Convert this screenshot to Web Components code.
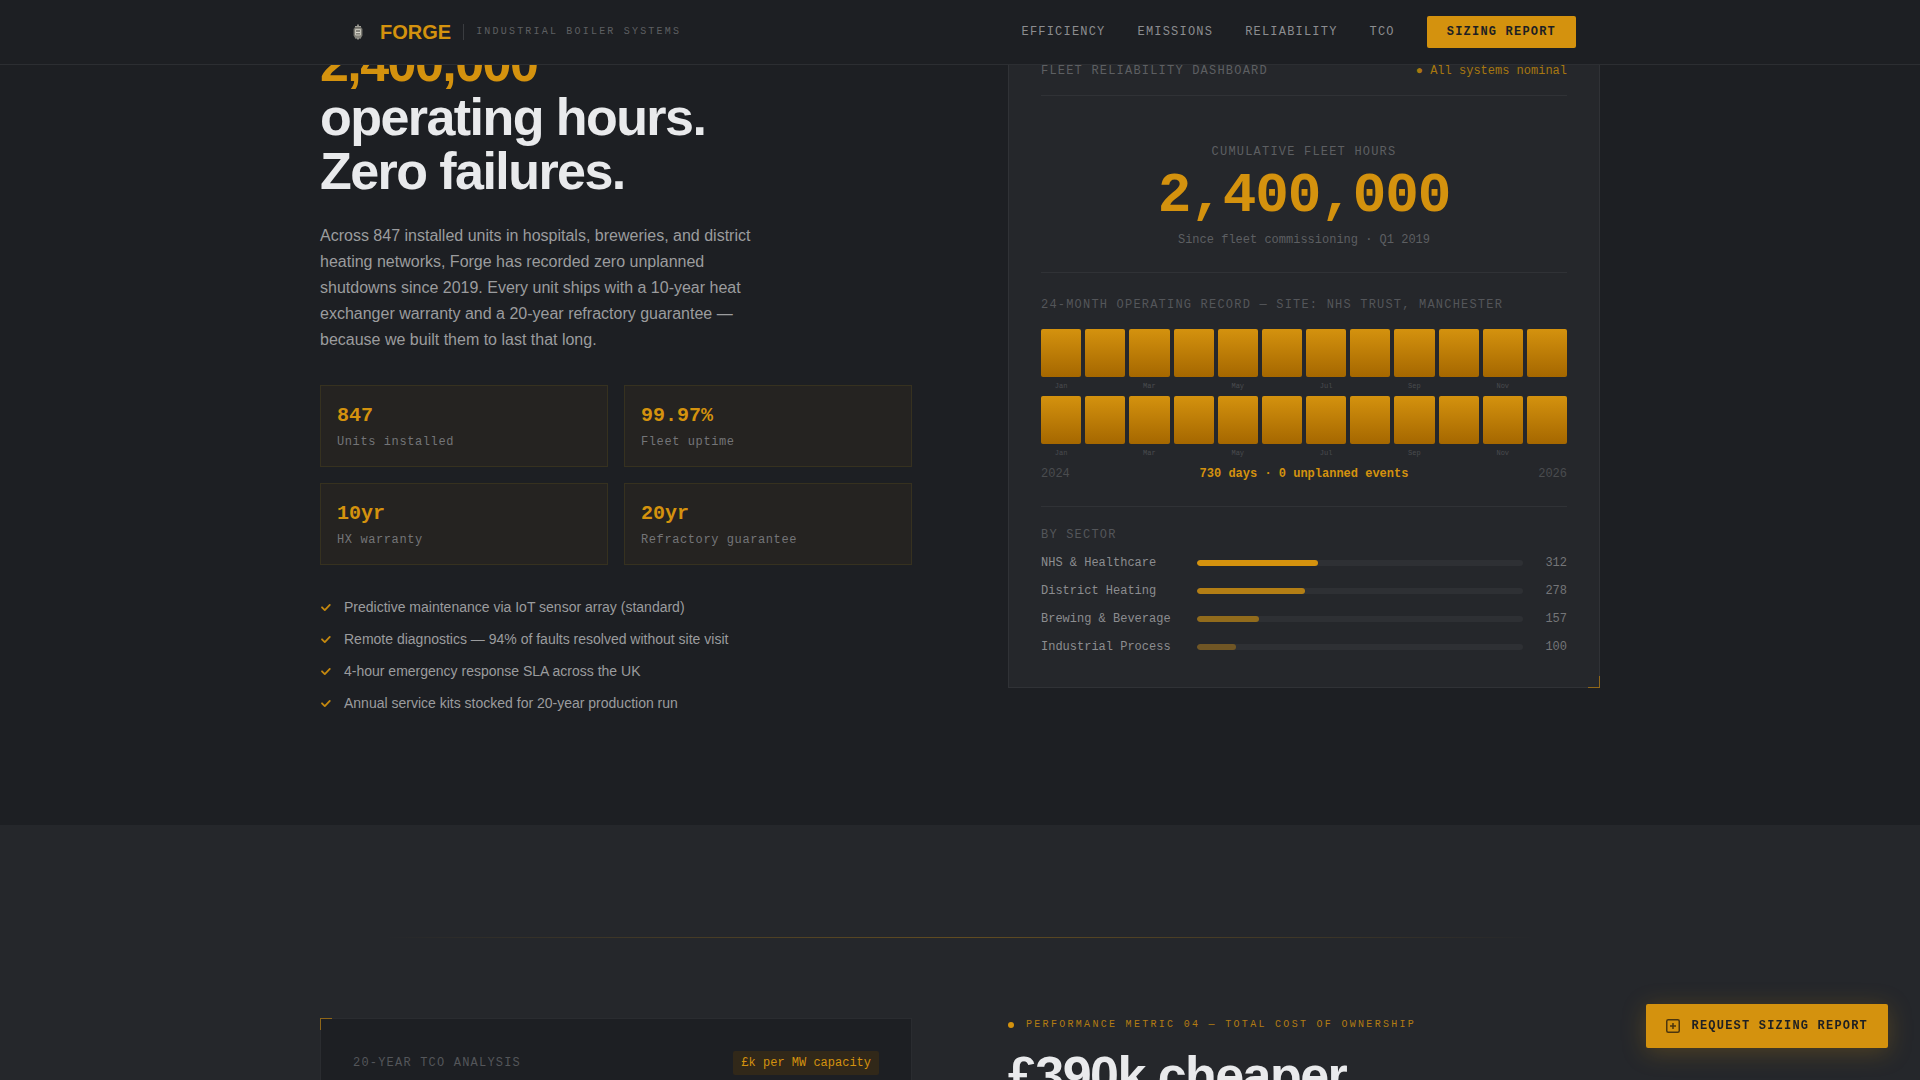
<!DOCTYPE html>
<html lang="en">
<head>
<meta charset="utf-8">
<title>Forge — Industrial Boiler Systems</title>
<style>
  :root {
    --ink: #1d1f23;
    --panel: #25272b;
    --line: #303236;
    --amber: #d4920e;
    --white: #e9eaec;
    --soft: #9b9c9e;
    --muted: #8c8d90;
    --mid: #747578;
    --dim: #5d5f62;
    --faint: #4a4c4f;
    --sans: "Liberation Sans", Arial, sans-serif;
    --mono: "Liberation Mono", "Courier New", monospace;
  }
  html, body { height: 100%; }
  body { margin: 0; background: var(--ink); color: var(--white); font-family: var(--sans); overflow: hidden; }
</style>
</head>
<body>
<forge-header></forge-header>
<main>
  <metric-section tone="ink">
    <reliability-story slot="left"></reliability-story>
    <fleet-dashboard slot="right"></fleet-dashboard>
  </metric-section>
  <metric-section tone="panel" divided>
    <tco-card slot="left"></tco-card>
    <tco-story slot="right"></tco-story>
  </metric-section>
</main>
<floating-cta>Request Sizing Report</floating-cta>

<script>
const define = (name, html, setup) => {
  const template = document.createElement('template');
  template.innerHTML = '<style>*,:host::after{box-sizing:border-box}h2,p{margin:0;padding:0}</style>' + html;
  customElements.define(name, class extends HTMLElement {
    constructor() {
      super();
      this.attachShadow({ mode: 'open' }).append(template.content.cloneNode(true));
    }
    connectedCallback() { if (setup) setup(this, this.shadowRoot); }
  });
};

define('forge-header', `
  <style>
    :host { display: block; position: fixed; inset: 0 0 auto; z-index: 10; background: #1d1f23; border-bottom: 1px solid #2c2e32; }
    .bar { max-width: 1280px; height: 64px; margin: 0 auto; padding: 0 24px; box-sizing: border-box; display: flex; align-items: center; justify-content: space-between; }
    .brand { display: flex; align-items: center; text-decoration: none; gap: 12px; }
    .mark { display: flex; align-items: center; gap: 8px; color: var(--amber); font: bold 20px/24px var(--sans); }
    .tag { border-left: 1px solid #3a3c40; padding-left: 12px; font: 10px/16px var(--mono); letter-spacing: 0.22em; color: var(--dim); text-transform: uppercase; }
    nav { display: flex; align-items: center; gap: 32px; font: 12px/16px var(--mono); letter-spacing: 0.1em; text-transform: uppercase; }
    nav a { color: var(--muted); text-decoration: none; }
    button { font: bold 12px/16px var(--mono); letter-spacing: 0.1em; text-transform: uppercase; color: #1d1f23; background: var(--amber); border: 0; border-radius: 2px; padding: 8px 20px; }
  </style>
  <div class="bar">
    <a class="brand" href="#top">
      <span class="mark">
        <svg width="28" height="28" viewBox="0 0 28 28" fill="none" aria-hidden="true">
          <path d="M14 6.500v2M14 19.500v2" stroke="#8b8a84" stroke-width="2"/>
          <path d="M11 9.500h6l1 1.500v6.500l-1 2h-6l-1-2v-6.500z" fill="#85847c" stroke="#6d6c66" stroke-width="1"/>
          <path d="M11 8.500h6M11 20h6" stroke="#a09f97" stroke-width="1"/>
          <path d="M11.500 11.500h5v5.500h-5z" stroke="#c4c2b8" stroke-width="1"/>
          <path d="M12 14.500h4" stroke="#dad8ce" stroke-width="1"/>
        </svg>FORGE</span>
      <span class="tag">Industrial Boiler Systems</span>
    </a>
    <nav>
      <a href="#efficiency">Efficiency</a><a href="#emissions">Emissions</a><a href="#reliability">Reliability</a><a href="#tco">TCO</a>
      <button type="button">Sizing Report</button>
    </nav>
  </div>`);

define('metric-section', `
  <style>
    :host { display: block; background: var(--ink); padding: 5px 32px 112px; }
    :host([tone="panel"]) { background: var(--panel); padding-top: 112px; }
    hr { display: none; }
    :host([divided]) hr { display: block; max-width: 1152px; height: 1px; margin: 0 auto 80px; border: 0; background: linear-gradient(90deg, transparent, var(--amber), transparent); opacity: 0.35; }
    .grid { max-width: 1280px; margin: 0 auto; display: grid; grid-template-columns: 1fr 1fr; gap: 96px; align-items: center; }
    :host([divided]) .grid { align-items: start; }
  </style>
  <hr>
  <div class="grid"><slot name="left"></slot><slot name="right"></slot></div>`);

define('stat-tile', `
  <style>
    :host { display: block; border: 1px solid #36311f; background: #252321; padding: 16px; font-family: var(--mono); }
    .value { font-size: 20px; line-height: 28px; font-weight: bold; color: var(--amber); }
    .label { margin-top: 4px; font-size: 12px; line-height: 16px; letter-spacing: 0.05em; color: var(--mid); }
  </style>
  <div class="value"><slot name="value"></slot></div>
  <div class="label"><slot></slot></div>`);

define('check-item', `
  <style>
    :host { display: flex; align-items: center; gap: 12px; font: 14px/20px var(--sans); color: var(--soft); }
  </style>
  <svg width="12" height="12" viewBox="0 0 12 12" fill="none" stroke="#c4880f" stroke-width="1.800" stroke-linecap="round" stroke-linejoin="round" aria-hidden="true"><path d="M2 6.300l2.800 2.800 5-5.200"/></svg>
  <span><slot></slot></span>`);

define('reliability-story', `
  <style>
    :host { display: block; padding-top: 31px; }
    h2 { font-size: 52px; line-height: 54px; letter-spacing: -0.03em; font-weight: bold; }
    h2 span { display: block; }
    .hot { color: var(--amber); }
    p { margin: 25px 0 32px; max-width: 448px; font-size: 16px; line-height: 26px; color: var(--soft); }
    .tiles { display: grid; grid-template-columns: 1fr 1fr; gap: 16px; margin-bottom: 32px; }
    .list { display: grid; gap: 12px; }
  </style>
  <h2><span class="hot">2,400,000</span><span>operating hours.</span><span>Zero failures.</span></h2>
  <p>Across 847 installed units in hospitals, breweries, and district heating networks, Forge has recorded zero unplanned shutdowns since 2019. Every unit ships with a 10-year heat exchanger warranty and a 20-year refractory guarantee — because we built them to last that long.</p>
  <div class="tiles">
    <stat-tile><span slot="value">847</span>Units installed</stat-tile>
    <stat-tile><span slot="value">99.97%</span>Fleet uptime</stat-tile>
    <stat-tile><span slot="value">10yr</span>HX warranty</stat-tile>
    <stat-tile><span slot="value">20yr</span>Refractory guarantee</stat-tile>
  </div>
  <div class="list" role="list">
    <check-item role="listitem">Predictive maintenance via IoT sensor array (standard)</check-item>
    <check-item role="listitem">Remote diagnostics — 94% of faults resolved without site visit</check-item>
    <check-item role="listitem">4-hour emergency response SLA across the UK</check-item>
    <check-item role="listitem">Annual service kits stocked for 20-year production run</check-item>
  </div>`);

define('corner-card', `
  <style>
    :host { display: block; position: relative; background: var(--panel); border: 1px solid var(--line); padding: 32px; font: 12px/16px var(--mono); }
    :host([tone="ink"]) { background: var(--ink); border-color: #2a2c30; }
    :host::after { content: ""; position: absolute; width: 12px; height: 12px; border: 0 solid #8f6618; }
    :host([corner="br"])::after { right: -1px; bottom: -1px; border-width: 0 1px 1px 0; }
    :host([corner="tl"])::after { left: -1px; top: -1px; border-width: 1px 0 0 1px; }
  </style>
  <slot></slot>`);

define('month-row', `
  <style>
    :host { display: grid; grid-template-columns: repeat(12, 1fr); gap: 4px; }
    .bar { height: 48px; border-radius: 2px; background: linear-gradient(#d4920e, #a56700); }
    .name { margin-top: 4px; height: 10px; font: 7px/10px var(--mono); text-align: center; color: var(--faint); }
  </style>`, (host, root) => {
  ['Jan', '', 'Mar', '', 'May', '', 'Jul', '', 'Sep', '', 'Nov', ''].forEach(name => {
    const cell = document.createElement('div');
    cell.innerHTML = '<div class="bar"></div><div class="name">' + name + '</div>';
    root.append(cell);
  });
});

define('sector-row', `
  <style>
    :host { display: grid; grid-template-columns: 140px 1fr 28px; gap: 16px; align-items: center; color: var(--muted); }
    .track { height: 6px; border-radius: 3px; background: #2e3034; overflow: hidden; }
    .fill { height: 100%; border-radius: 3px; background: var(--amber); }
    .count { text-align: right; color: var(--mid); }
  </style>
  <span><slot></slot></span><div class="track"><div class="fill"></div></div><span class="count"></span>`, (host, root) => {
  const fill = root.querySelector('.fill');
  fill.style.width = host.getAttribute('share') + '%';
  fill.style.opacity = host.getAttribute('strength');
  root.querySelector('.count').textContent = host.getAttribute('count');
});

define('fleet-dashboard', `
  <style>
    :host { display: block; }
    .caps { letter-spacing: 0.1em; text-transform: uppercase; color: var(--dim); }
    .faint { color: #54565a; }
    .head, .foot { display: flex; justify-content: space-between; }
    .head { padding-bottom: 16px; border-bottom: 1px solid var(--line); }
    .status { color: #a8770f; }
    .total { padding: 48px 0 24px; text-align: center; border-bottom: 1px solid var(--line); }
    .number { margin: 8px 0; font-size: 56px; line-height: 56px; font-weight: bold; letter-spacing: -0.02em; color: var(--amber); }
    .since { color: var(--dim); }
    .record { padding: 24px 0; border-bottom: 1px solid var(--line); }
    .months { display: grid; gap: 5px; margin: 16px 0 8px; }
    .foot { color: var(--faint); }
    .foot strong { color: var(--amber); }
    .sectors { display: grid; gap: 12px; padding-top: 20px; }
  </style>
  <corner-card corner="br">
    <div class="head"><span class="caps">Fleet Reliability Dashboard</span><span class="status">● All systems nominal</span></div>
    <div class="total">
      <div class="caps">Cumulative Fleet Hours</div>
      <div class="number">2,400,000</div>
      <div class="since">Since fleet commissioning · Q1 2019</div>
    </div>
    <div class="record">
      <div class="caps faint">24-Month Operating Record — Site: NHS Trust, Manchester</div>
      <div class="months"><month-row></month-row><month-row></month-row></div>
      <div class="foot"><span>2024</span><strong>730 days · 0 unplanned events</strong><span>2026</span></div>
    </div>
    <div class="sectors">
      <div class="caps faint">By Sector</div>
      <sector-row share="37" strength="1" count="312">NHS &amp; Healthcare</sector-row>
      <sector-row share="33" strength="0.8" count="278">District Heating</sector-row>
      <sector-row share="19" strength="0.6" count="157">Brewing &amp; Beverage</sector-row>
      <sector-row share="12" strength="0.4" count="100">Industrial Process</sector-row>
    </div>
  </corner-card>`);

define('tco-card', `
  <style>
    :host { display: block; }
    .head { display: flex; justify-content: space-between; align-items: center; }
    .title { letter-spacing: 0.1em; text-transform: uppercase; color: #54565a; }
    .unit { padding: 4px 8px; border-radius: 2px; background: #312819; color: var(--amber); }
  </style>
  <corner-card corner="tl" tone="ink">
    <div class="head"><span class="title">20-Year TCO Analysis</span><span class="unit">£k per MW capacity</span></div>
  </corner-card>`);

define('tco-story', `
  <style>
    :host { display: block; }
    .eyebrow { display: flex; align-items: center; gap: 12px; margin-bottom: 16px; font: 10px/14px var(--mono); letter-spacing: 0.23em; text-transform: uppercase; color: #b37c12; }
    .dot { width: 6px; height: 6px; border-radius: 50%; background: var(--amber); }
    h2 { font-size: 52px; line-height: 54px; letter-spacing: -0.03em; font-weight: bold; }
  </style>
  <div class="eyebrow"><span class="dot"></span>Performance Metric 04 — Total Cost of Ownership</div>
  <h2>£390k cheaper</h2>`);

define('floating-cta', `
  <style>
    :host { display: block; position: fixed; right: 32px; bottom: 32px; z-index: 20; }
    button { display: flex; align-items: center; gap: 12px; padding: 14px 20px; border: 0; border-radius: 2px; background: var(--amber); color: #1d1f23; font: bold 12px/16px var(--mono); letter-spacing: 0.1em; text-transform: uppercase; box-shadow: 0 4px 24px rgba(212, 146, 14, 0.25); }
  </style>
  <button type="button">
    <svg width="14" height="14" viewBox="0 0 14 14" fill="none" stroke="#4a350e" stroke-width="1.500" aria-hidden="true"><rect x="0.750" y="0.750" width="12.500" height="12.500" rx="1.500"/><path d="M7 4v6M4 7h6"/></svg>
    <slot></slot>
  </button>`);
</script>
</body>
</html>
